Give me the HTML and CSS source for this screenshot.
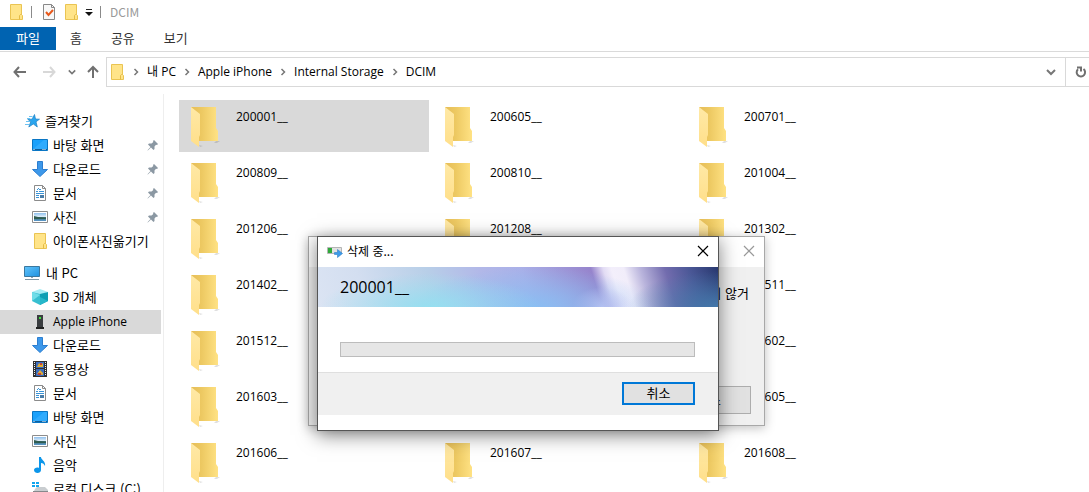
FILE: index.html
```html
<!DOCTYPE html>
<html lang="ko">

<head>
    <meta charset="UTF-8">
    <title>DCIM</title>
    <link rel="stylesheet" href="styles.css">
</head>

<body>
    <!-- Shared icons -->
    <svg class="sprite" aria-hidden="true">
        <defs>
            <linearGradient id="foldBack" x1="0" x2="1">
                <stop offset="0" stop-color="#e6bd58" />
                <stop offset="0.4" stop-color="#edc962" />
                <stop offset="1" stop-color="#ffe284" />
            </linearGradient>
            <linearGradient id="foldFront" x1="0" x2="0" y1="0" y2="1">
                <stop offset="0" stop-color="#ffe9a6" />
                <stop offset="1" stop-color="#ffdf8a" />
            </linearGradient>
            <linearGradient id="screen" x1="0" x2="1" y1="0" y2="1">
                <stop offset="0" stop-color="#62c4fb" />
                <stop offset="1" stop-color="#1f92e0" />
            </linearGradient>
            <linearGradient id="photo" x1="0" x2="0" y1="0" y2="1">
                <stop offset="0" stop-color="#8fc0ee" />
                <stop offset="0.45" stop-color="#dcecf8" />
                <stop offset="0.55" stop-color="#3c6c6c" />
                <stop offset="1" stop-color="#5c9ad0" />
            </linearGradient>
        </defs>
        <symbol id="i-folder" viewBox="0 0 32 42">
            <path d="M26 35h4l-3 2h-3zM9 39l4 1-3 1z" fill="#000" opacity=".12" />
            <path d="M1 1h25v21l2 3v10H9z" fill="url(#foldBack)" />
            <path d="M1 1l9 7v21l-1 2v10l-8-6z" fill="url(#foldFront)" />
        </symbol>
        <symbol id="i-smallfolder" viewBox="0 0 16 16">
            <path d="M2.500 .5h11v10l1 1v4h-12z" fill="#ffe489" stroke="#eac452" />
            <path d="M11.500 15.500v-4l1-1h1" fill="none" stroke="#e5bb45" />
        </symbol>
        <symbol id="i-star" viewBox="0 0 16 16">
            <path d="M9.500 1.500l1 4.500 4 .2-3.500 2.600 1.300 5.200-4-3-4.500 3 1.900-5.200-3-2.600h4.300z" fill="#2aa5ee" stroke="#1b80c4" stroke-width=".7" />
            <path d="M4 3.500h3.500M2 5.500h3M1 8.500h4M0 11.500h4" stroke="#6cc2f2" />
        </symbol>
        <symbol id="i-desktop" viewBox="0 0 16 16">
            <path d="M.5 2.500h15v11H.5z" fill="#1ba1fb" stroke="#0a76c4" />
            <path d="M1 12L12 3h3v9z" fill="#45b6ff" opacity=".5" />
            <path d="M1 12.500h14" stroke="#0f5f9c" />
            <path d="M1.500 12.500h1m8 0h1m1 0h1" stroke="#fff" />
        </symbol>
        <symbol id="i-down" viewBox="0 0 16 16">
            <path d="M5.500 .5h5v8h5L8 15.500 .5 8.500h5z" fill="#3d98ea" stroke="#2c7ed0" />
        </symbol>
        <symbol id="i-doc" viewBox="0 0 16 16">
            <path d="M2.500 .5h8l3 3v12h-11z" fill="#fff" stroke="#8b8b8b" />
            <path d="M10.500 .5v3h3" fill="none" stroke="#8b8b8b" />
            <path d="M7 4.500h2M4 6.500h2m1 0h5M4 8.500h8M4 10.500h3M4 12.500h3M5 5l2-2" stroke="#3a93d6" />
            <path d="M8 10h4v3H8z" fill="#4a7da8" />
        </symbol>
        <symbol id="i-photo" viewBox="0 0 16 16">
            <path d="M.5 2.500h15v11H.5z" fill="#fff" stroke="#8d8d8d" />
            <path d="M2 4h12v8H2z" fill="url(#photo)" />
            <path d="M2 7l4 1 8 1v1H2z" fill="#2f5c50" />
        </symbol>
        <symbol id="i-pc" viewBox="0 0 16 16">
            <path d="M.5 1.500h15v10H.5z" fill="url(#screen)" stroke="#3b789f" />
            <path d="M7 12h2v1H7z" fill="#8ea6b4" />
            <path d="M1 14.500h14" stroke="#8098a6" />
        </symbol>
        <symbol id="i-cube" viewBox="0 0 16 16">
            <path d="M0 3l8-3 8 3-8 3z" fill="#a5ecf4" />
            <path d="M0 3l8 2v11l-8-4z" fill="#37bfd0" />
            <path d="M16 3L8 5v11l8-4z" fill="#0e9fb4" />
            <path d="M0 3l8 3-8 6z" fill="#6fdde8" />
            <path d="M16 12L8 8v8z" fill="#26b7ca" />
        </symbol>
        <symbol id="i-phone" viewBox="0 0 16 16">
            <path d="M5 1h6v12H5z" fill="#3a3d40" />
            <path d="M4 13h8v2H4z" fill="#222" />
            <path d="M7 3h2v2H7z" fill="#3fe03f" />
        </symbol>
        <symbol id="i-video" viewBox="0 0 16 16">
            <path d="M1 0h14v16H1z" fill="#303030" />
            <path d="M2.500 1v14M13.500 1v14" stroke="#eee" stroke-dasharray="1 1" />
            <path d="M4 1h8v6H4zM4 8h8v7H4z" fill="#396cc0" />
            <path d="M5 6l2-4 2 2 2-2v4zM5 13l3-4 3 3v2z" fill="#e0ae35" />
            <path d="M8 2h2v2H8zM6 12h3v2H6z" fill="#c84438" />
        </symbol>
        <symbol id="i-music" viewBox="0 0 16 16">
            <path d="M7 0h2c0 3 5 4 4 9-1-2-2-3-4-3v7c0 4-7 4-7 0 0-2 3-3 5-2z" fill="#0c96ea" />
        </symbol>
        <symbol id="i-disk" viewBox="0 0 16 16">
            <path d="M0 1h3v2H0zM4 1h3v2H4zM0 4h3v2H0zM4 4h3v2H4z" fill="#12a5ee" />
            <path d="M3 8l2-2h8l3 3v3H1z" fill="#c9cdd0" />
            <path d="M1 10h15v4H1z" fill="#85898c" />
        </symbol>
        <symbol id="i-pin" viewBox="0 0 12 12">
            <path d="M7 1l4 4-1 1-1-.3L7.500 7.500 7.500 10l-1 1-2.500-2.500L.8 11.500 .5 11.200 3.500 8 1 5.500l1-1 2.500 0L6.300 3 6 2z" fill="#8b98a3" />
        </symbol>
        <symbol id="i-chevron" viewBox="0 0 8 8">
            <path d="M2.500 1l3 3-3 3" fill="none" stroke="#777" stroke-width="1.500" />
        </symbol>
        <symbol id="i-expand" viewBox="0 0 10 10">
            <path d="M1 3l4 4 4-4" fill="none" stroke="#777" stroke-width="2" />
        </symbol>
        <symbol id="i-close" viewBox="0 0 12 12">
            <path d="M1 1l10 10M11 1L1 11" fill="none" stroke="currentColor" stroke-width="1.200" />
        </symbol>
    </svg>

    <div class="explorer">
        <!-- Title bar -->
        <header class="titlebar">
            <svg class="icon"><use href="#i-smallfolder" /></svg>
            <span class="divider"></span>
            <button class="quick" aria-label="속성">
                <svg class="icon" viewBox="0 0 16 16">
                    <path d="M2.500 .5h8l3 3v12h-11z" fill="#f8f8f8" stroke="#888" />
                    <path d="M10.500 .5v3h3" fill="none" stroke="#888" />
                    <path d="M5 8l2.500 3L12 6" fill="none" stroke="#e8591c" stroke-width="2" />
                </svg>
            </button>
            <button class="quick" aria-label="새 폴더"><svg class="icon"><use href="#i-smallfolder" /></svg></button>
            <button class="quick more" aria-label="사용자 지정">
                <svg viewBox="0 0 8 8"><path d="M1 1.500h6" stroke="#222" /><path d="M0 4h8L4 8z" fill="#111" /></svg>
            </button>
            <span class="divider"></span>
            <span class="title">DCIM</span>
        </header>

        <nav class="tabs">
            <button class="tab file">파일</button>
            <button class="tab">홈</button>
            <button class="tab">공유</button>
            <button class="tab">보기</button>
        </nav>

        <!-- Address bar -->
        <div class="toolbar">
            <button class="arrow" aria-label="뒤로"><svg viewBox="0 0 14 12"><path d="M13 6H2M6 1L1.500 6 6 11" /></svg></button>
            <button class="arrow off" aria-label="앞으로"><svg viewBox="0 0 14 12"><path d="M1 6h11M8 1l4.500 5L8 11" /></svg></button>
            <button class="recent" aria-label="최근 위치"><svg><use href="#i-expand" /></svg></button>
            <button class="arrow up" aria-label="위로"><svg viewBox="0 0 12 14"><path d="M6 13V2M1 7l5-5 5 5" /></svg></button>
            <div class="address">
                <svg class="icon"><use href="#i-smallfolder" /></svg>
                <svg class="chevron"><use href="#i-chevron" /></svg>
                <a href="#">내 PC</a>
                <svg class="chevron"><use href="#i-chevron" /></svg>
                <a href="#">Apple iPhone</a>
                <svg class="chevron"><use href="#i-chevron" /></svg>
                <a href="#">Internal Storage</a>
                <svg class="chevron"><use href="#i-chevron" /></svg>
                <a href="#">DCIM</a>
                <button class="expand" aria-label="이전 위치"><svg><use href="#i-expand" /></svg></button>
                <button class="refresh" aria-label="새로 고침">
                    <svg viewBox="0 0 12 12"><path d="M8.500 3A4.200 4.200 0 1 1 3 3.200M2 1.500h4v4" /></svg>
                </button>
            </div>
        </div>

        <div class="content">
            <!-- Navigation pane -->
            <nav class="sidebar">
                <a class="root" href="#"><svg class="icon"><use href="#i-star" /></svg>즐겨찾기</a>
                <a href="#"><svg class="icon"><use href="#i-desktop" /></svg>바탕 화면<svg class="pin"><use href="#i-pin" /></svg></a>
                <a href="#"><svg class="icon"><use href="#i-down" /></svg>다운로드<svg class="pin"><use href="#i-pin" /></svg></a>
                <a href="#"><svg class="icon"><use href="#i-doc" /></svg>문서<svg class="pin"><use href="#i-pin" /></svg></a>
                <a href="#"><svg class="icon"><use href="#i-photo" /></svg>사진<svg class="pin"><use href="#i-pin" /></svg></a>
                <a href="#"><svg class="icon"><use href="#i-smallfolder" /></svg>아이폰사진옮기기</a>
                <a class="root pc" href="#"><svg class="icon"><use href="#i-pc" /></svg>내 PC</a>
                <a href="#"><svg class="icon"><use href="#i-cube" /></svg>3D 개체</a>
                <a class="current" href="#"><svg class="icon"><use href="#i-phone" /></svg>Apple iPhone</a>
                <a href="#"><svg class="icon"><use href="#i-down" /></svg>다운로드</a>
                <a href="#"><svg class="icon"><use href="#i-video" /></svg>동영상</a>
                <a href="#"><svg class="icon"><use href="#i-doc" /></svg>문서</a>
                <a href="#"><svg class="icon"><use href="#i-desktop" /></svg>바탕 화면</a>
                <a href="#"><svg class="icon"><use href="#i-photo" /></svg>사진</a>
                <a href="#"><svg class="icon"><use href="#i-music" /></svg>음악</a>
                <a href="#"><svg class="icon"><use href="#i-disk" /></svg>로컬 디스크 (C:)</a>
            </nav>

            <!-- Folder list -->
            <main class="folders">
                <a class="folder selected" href="#"><svg><use href="#i-folder" /></svg>200001__</a>
                <a class="folder" href="#"><svg><use href="#i-folder" /></svg>200605__</a>
                <a class="folder" href="#"><svg><use href="#i-folder" /></svg>200701__</a>
                <a class="folder" href="#"><svg><use href="#i-folder" /></svg>200809__</a>
                <a class="folder" href="#"><svg><use href="#i-folder" /></svg>200810__</a>
                <a class="folder" href="#"><svg><use href="#i-folder" /></svg>201004__</a>
                <a class="folder" href="#"><svg><use href="#i-folder" /></svg>201206__</a>
                <a class="folder" href="#"><svg><use href="#i-folder" /></svg>201208__</a>
                <a class="folder" href="#"><svg><use href="#i-folder" /></svg>201302__</a>
                <a class="folder" href="#"><svg><use href="#i-folder" /></svg>201402__</a>
                <a class="folder" href="#"><svg><use href="#i-folder" /></svg>201510__</a>
                <a class="folder" href="#"><svg><use href="#i-folder" /></svg>201511__</a>
                <a class="folder" href="#"><svg><use href="#i-folder" /></svg>201512__</a>
                <a class="folder" href="#"><svg><use href="#i-folder" /></svg>201601__</a>
                <a class="folder" href="#"><svg><use href="#i-folder" /></svg>201602__</a>
                <a class="folder" href="#"><svg><use href="#i-folder" /></svg>201603__</a>
                <a class="folder" href="#"><svg><use href="#i-folder" /></svg>201604__</a>
                <a class="folder" href="#"><svg><use href="#i-folder" /></svg>201605__</a>
                <a class="folder" href="#"><svg><use href="#i-folder" /></svg>201606__</a>
                <a class="folder" href="#"><svg><use href="#i-folder" /></svg>201607__</a>
                <a class="folder" href="#"><svg><use href="#i-folder" /></svg>201608__</a>
            </main>
        </div>
    </div>

    <!-- Error dialog behind -->
    <section class="dialog error">
        <div class="dialog-title">
            <button class="close" aria-label="닫기"><svg><use href="#i-close" /></svg></button>
        </div>
        <div class="error-body">
            <p>지 않거</p>
            <button>취소</button>
        </div>
    </section>

    <!-- Delete progress dialog -->
    <section class="dialog delete">
        <div class="dialog-title">
            <svg class="icon" viewBox="0 0 16 16">
                <path d="M.5 4.500h14v6H.5z" fill="#e2e2e2" stroke="#b5b5b5" />
                <path d="M1 5h4v5H1z" fill="#2faa3a" />
                <path d="M7.500 9.500h3v-3l5 4-5 4v-3h-3z" fill="#3d9bea" stroke="#2e80c8" stroke-width=".6" />
            </svg>
            <span>삭제 중...</span>
            <button class="close" aria-label="닫기"><svg><use href="#i-close" /></svg></button>
        </div>
        <h1 class="banner" id="deleting">200001__</h1>
        <div class="dialog-body">
            <progress value="0" max="100" aria-labelledby="deleting"></progress>
        </div>
        <div class="dialog-footer">
            <button>취소</button>
        </div>
    </section>
</body>

</html>
```

FILE: styles.css
```css
/* Resetting default margins and padding */
* {
    margin: 0;
    padding: 0;
    box-sizing: border-box;
}

/* Body and overall layout */
body {
    font-family: "Noto Sans CJK KR", "Open Sans", sans-serif;
    font-size: 13px;
    line-height: 16px;
    background-color: #fff;
    color: #000;
    overflow: hidden;
}

a {
    color: inherit;
    text-decoration: none;
}

button {
    border: none;
    background: none;
    font: inherit;
    color: inherit;
}

svg {
    display: block;
    flex-shrink: 0;
}

.sprite {
    position: absolute;
    width: 0;
    height: 0;
}

.icon {
    width: 16px;
    height: 16px;
}

.explorer {
    display: flex;
    flex-direction: column;
    height: 100vh;
}

/* Title bar */
.titlebar {
    display: flex;
    align-items: center;
    height: 27px;
    padding: 0 8px 4px;
}

.divider {
    width: 1px;
    height: 12px;
    margin: 0 9px 0 7px;
    background-color: #8a8a8a;
}

.quick {
    margin-right: 6px;
}

.more {
    margin-right: 0;
}

.more svg {
    width: 8px;
    height: 8px;
}

.title {
    color: #999;
    font-size: 12px;
}

/* Ribbon tabs */
.tabs {
    display: flex;
    height: 25px;
    border-bottom: 1px solid #dadada;
    color: #333;
}

.tab {
    height: 23px;
    padding: 0 14px 2px;
}

.tab:nth-child(n + 3) {
    padding: 0 14px 2px 15px;
}

.tab.file {
    padding: 0 16px 2px;
    background-color: #0063b1;
    color: #fff;
}

/* Address bar */
.toolbar {
    display: flex;
    align-items: center;
    height: 40px;
    padding-left: 13px;
}

.arrow svg {
    width: 14px;
    height: 12px;
    fill: none;
    stroke: #707070;
    stroke-width: 2;
}

.arrow.off {
    margin-left: 15px;
}

.arrow.off svg {
    stroke: #d8d8d8;
}

.recent {
    margin: 0 11px 0 12px;
}

.recent svg {
    width: 8px;
    height: 8px;
}

.arrow.up svg {
    width: 12px;
    height: 14px;
}

.address {
    display: flex;
    flex: 1;
    align-items: center;
    height: 30px;
    margin-left: 7px;
    padding-left: 2px;
    border: 1px solid #d9d9d9;
    border-right: none;
    font-family: "Open Sans", "Noto Sans CJK KR", sans-serif;
    font-size: 12px;
}

.chevron {
    width: 8px;
    height: 8px;
    margin: 0 7px;
}

.expand {
    margin-left: auto;
    margin-right: 9px;
}

.expand svg {
    width: 10px;
    height: 10px;
}

.refresh {
    height: 28px;
    padding: 0 2px 0 9px;
    border-left: 1px solid #d9d9d9;
}

.refresh svg {
    width: 12px;
    height: 12px;
    fill: none;
    stroke: #707070;
    stroke-width: 2;
}

.content {
    display: flex;
    flex: 1;
    min-height: 0;
    padding-top: 2px;
}

/* Navigation pane */
.sidebar {
    flex: 0 0 164px;
    padding: 16px 2px 0 0;
    border-right: 1px solid #eee;
    overflow: hidden;
}

.sidebar a {
    display: flex;
    align-items: center;
    gap: 5px;
    height: 24px;
    padding: 0 2px 2px 32px;
    white-space: nowrap;
}

.sidebar .root {
    gap: 4px;
    padding-left: 25px;
}

.sidebar .pc {
    gap: 6px;
    margin-top: 8px;
    padding-left: 24px;
}

.sidebar .current {
    padding-bottom: 0;
    background-color: #d9d9d9;
    font-family: "Open Sans", sans-serif;
    font-size: 12px;
}

.pin {
    width: 12px;
    height: 12px;
    margin-left: auto;
}

/* Folder list */
.folders {
    display: grid;
    flex: 1;
    grid-template-columns: repeat(auto-fill, 250px);
    grid-auto-rows: 52px;
    align-content: start;
    gap: 4px;
    padding: 6px 0 0 15px;
    overflow: hidden;
}

.folder {
    display: flex;
    gap: 14px;
    padding: 6px 11px;
    font-family: "Open Sans", sans-serif;
    font-size: 12px;
    line-height: 22px;
}

.folder svg {
    width: 32px;
    height: 42px;
}

.folder.selected {
    background-color: #d9d9d9;
}

/* Dialogs */
.dialog {
    position: absolute;
    display: flex;
    flex-direction: column;
    background-color: #fff;
}

.dialog-title {
    display: flex;
    align-items: center;
    gap: 4px;
    height: 30px;
    padding: 0 9px 2px;
    font-size: 12px;
}

.close {
    margin-left: auto;
}

.close svg {
    width: 12px;
    height: 12px;
}

.error {
    left: 308px;
    top: 236px;
    width: 457px;
    border: 1px solid #a8a8a8;
    box-shadow: 0 2px 10px rgba(0, 0, 0, 0.25);
}

.error .close {
    color: #999;
}

.error-body {
    display: flex;
    flex-direction: column;
    align-items: flex-end;
    justify-content: space-between;
    height: 158px;
    padding: 18px 13px 11px;
    background-color: #f0f0f0;
}

.error-body p {
    padding-right: 2px;
}

.error-body button {
    width: 84px;
    height: 28px;
    border: 1px solid #adadad;
    background-color: #e1e1e1;
}

.delete {
    left: 317px;
    top: 236px;
    width: 402px;
    border: 1px solid #555;
    box-shadow: 0 4px 18px rgba(0, 0, 0, 0.5);
}

.banner {
    height: 40px;
    padding-left: 22px;
    font-family: "Open Sans", sans-serif;
    font-size: 16px;
    font-weight: normal;
    line-height: 40px;
    background:
        radial-gradient(ellipse 110px 34px at 28% 100%, #96dff0, transparent),
        radial-gradient(ellipse 120px 40px at 54% 100%, #8abdf2, transparent),
        radial-gradient(ellipse 30px 20px at 71% 100%, #d2c4f0, transparent),
        radial-gradient(ellipse 90px 36px at 100% 100%, #4478aa, transparent),
        linear-gradient(73deg, #dbe4f3 0%, #d3def0 12%, #b8cfe8 29%, #b2b8e8 42%, #aab0e8 52%, #9684cc 69%, #e2dcf4 72%, #f3effb 74%, #f1edfa 77%, #b9b4dc 81%, #726cae 87%, #4a5796 93%, #28386f 100%);
}

.dialog-body {
    padding: 35px 23px 15px 22px;
}

progress {
    display: block;
    width: 100%;
    height: 15px;
    border: 1px solid #bcbcbc;
    background-color: #e6e6e6;
    appearance: none;
}

progress::-webkit-progress-bar {
    background-color: #e6e6e6;
}

progress::-webkit-progress-value {
    background-color: #06b025;
}

.dialog-footer {
    display: flex;
    justify-content: flex-end;
    height: 43px;
    margin-bottom: 15px;
    padding: 9px 23px;
    border-top: 1px solid #dfdfdf;
    background-color: #f0f0f0;
}

.dialog-footer button {
    width: 73px;
    height: 23px;
    padding-bottom: 2px;
    border: 2px solid #0078d7;
    background-color: #e1e1e1;
}
```
